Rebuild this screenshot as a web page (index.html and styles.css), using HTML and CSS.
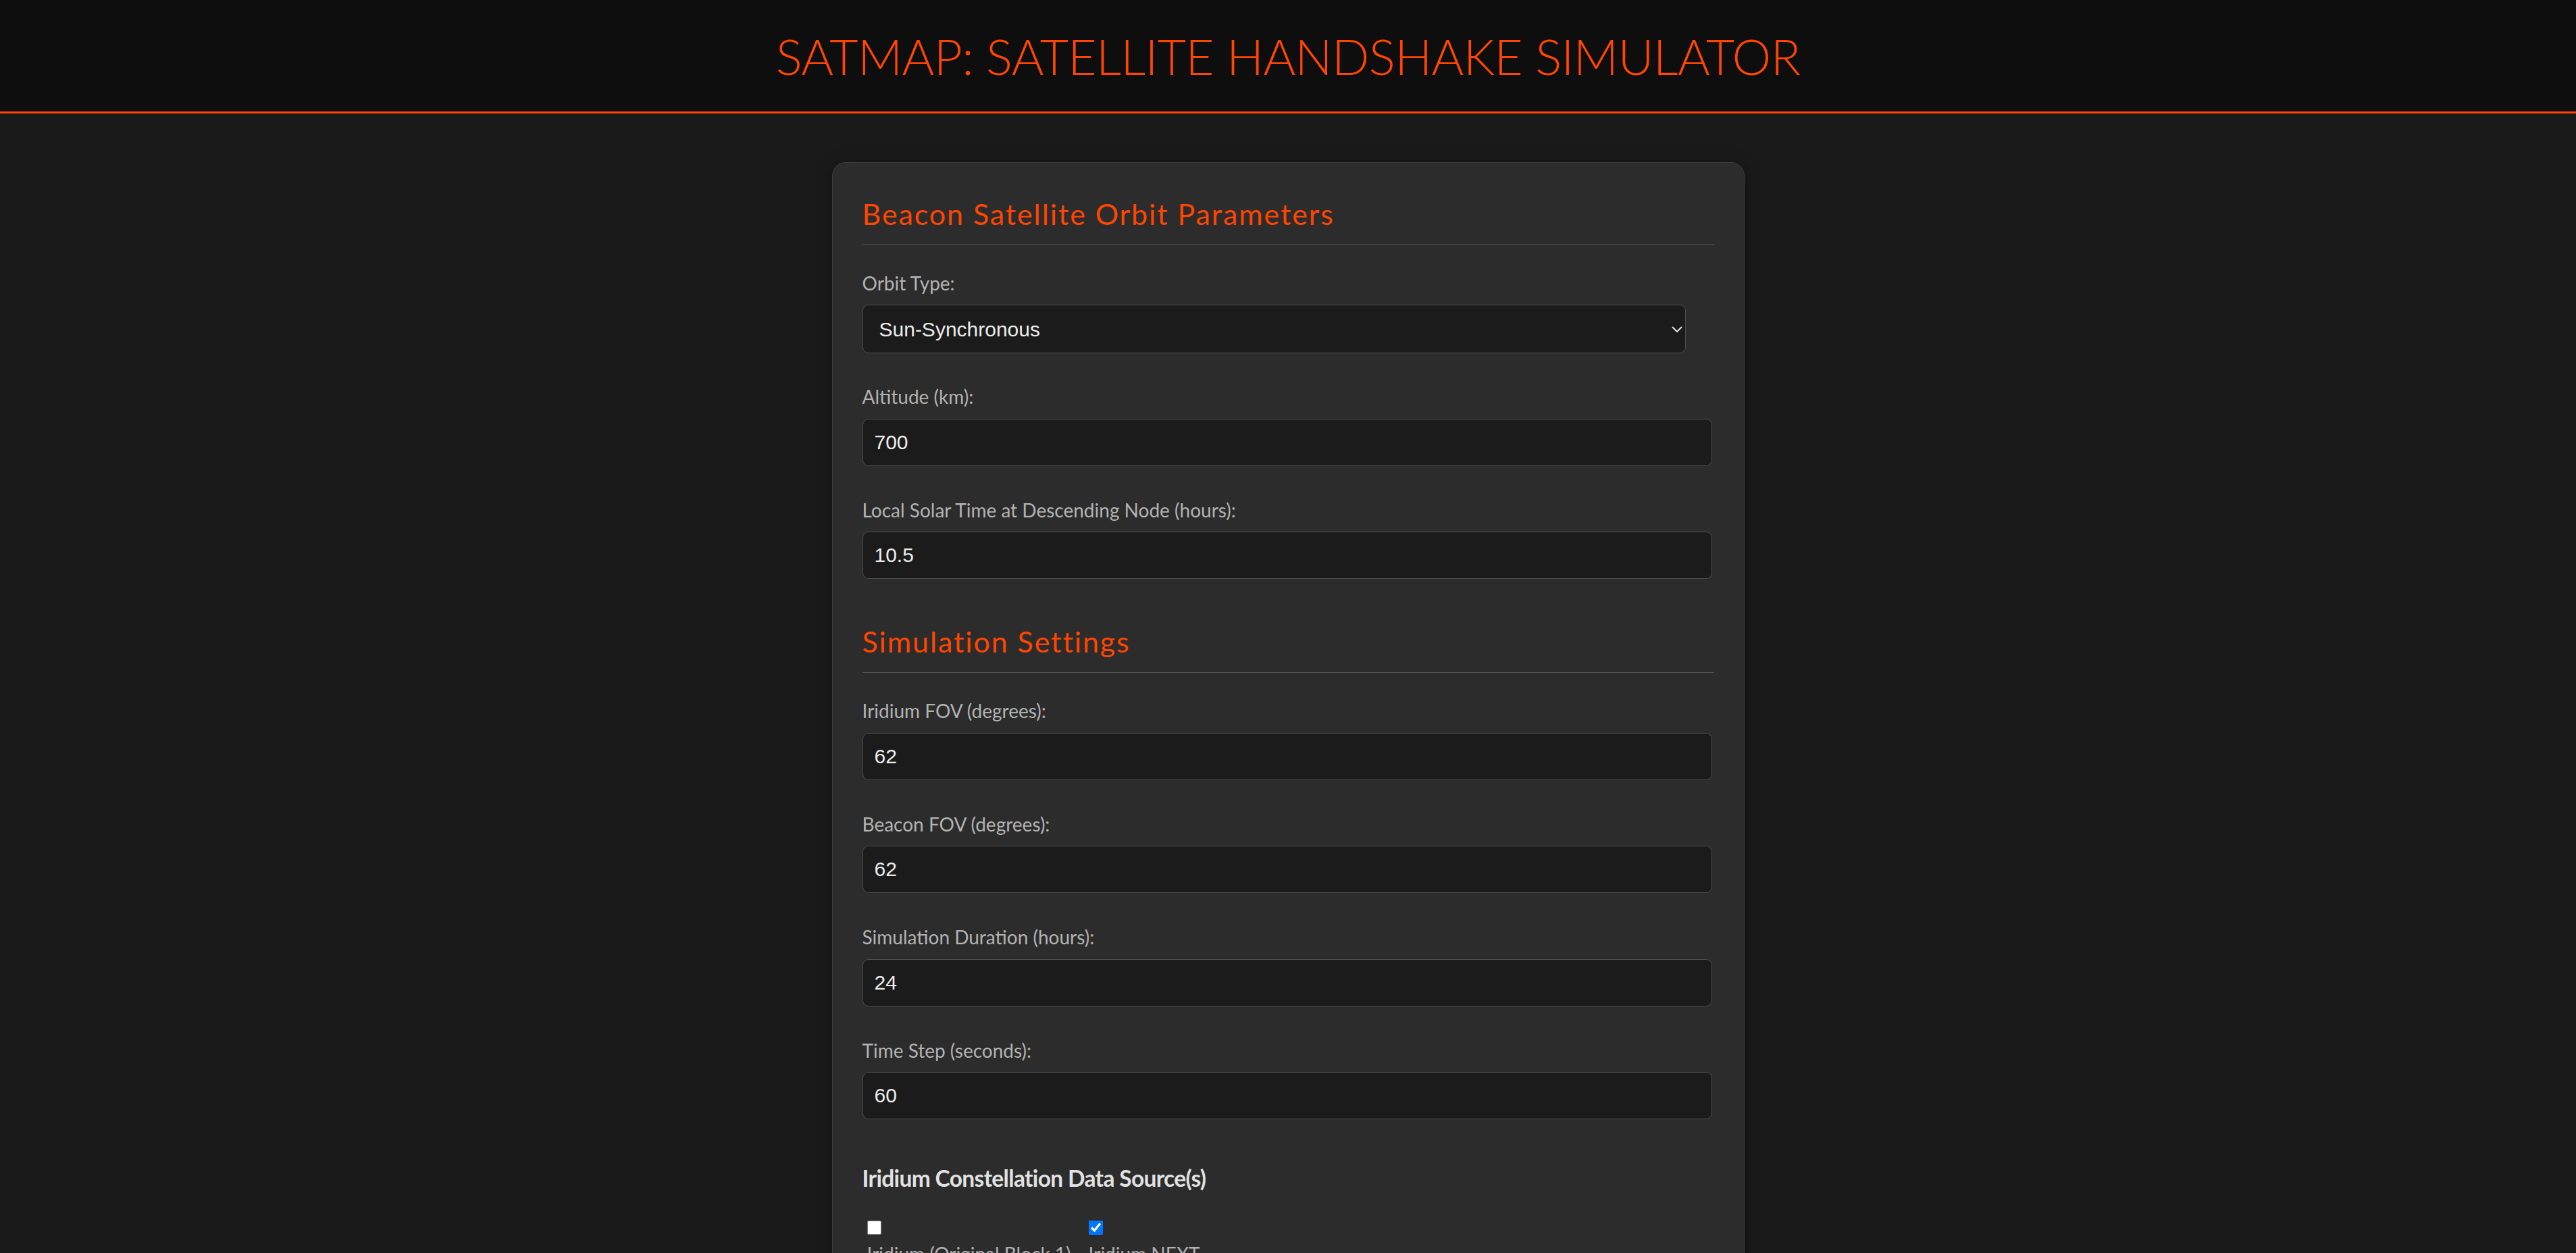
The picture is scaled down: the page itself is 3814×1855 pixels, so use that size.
FILE: index.html
```html
<!DOCTYPE html>
<html lang="en">
<head>
<meta charset="utf-8">
<title>SatMap: Satellite Handshake Simulator</title>
<link rel="stylesheet" href="styles.css">
</head>
<body>
<header class="site-header">
  <h1 class="site-title">SATMAP: SATELLITE HANDSHAKE SIMULATOR</h1>
</header>
<main class="page">
  <section class="panel">
    <h2 class="section-title">Beacon Satellite Orbit Parameters</h2>
    <div class="field field--select">
      <label class="field-label" for="orbitType">Orbit Type:</label>
      <div class="select-wrap">
        <select id="orbitType" class="select">
          <option>Sun-Synchronous</option>
          <option>Polar</option>
          <option>Equatorial</option>
        </select>
        <svg class="chevron" viewBox="0 0 16 9" width="16" height="9" aria-hidden="true"><path d="M1 1 L8 8 L15 1" fill="none" stroke="#e6e6e6" stroke-width="2"/></svg>
      </div>
    </div>
    <div class="field">
      <label class="field-label" for="altitude">Altitude (km):</label>
      <input id="altitude" class="input" type="text" value="700">
    </div>
    <div class="field">
      <label class="field-label" for="lst">Local Solar Time at Descending Node (hours):</label>
      <input id="lst" class="input" type="text" value="10.5">
    </div>

    <h2 class="section-title section-title--spaced">Simulation Settings</h2>
    <div class="field">
      <label class="field-label" for="iridiumFov">Iridium FOV (degrees):</label>
      <input id="iridiumFov" class="input" type="text" value="62">
    </div>
    <div class="field">
      <label class="field-label" for="beaconFov">Beacon FOV (degrees):</label>
      <input id="beaconFov" class="input" type="text" value="62">
    </div>
    <div class="field">
      <label class="field-label" for="duration">Simulation Duration (hours):</label>
      <input id="duration" class="input" type="text" value="24">
    </div>
    <div class="field">
      <label class="field-label" for="timeStep">Time Step (seconds):</label>
      <input id="timeStep" class="input" type="text" value="60">
    </div>

    <h3 class="sub-title">Iridium Constellation Data Source(s)</h3>
    <div class="checks">
      <label class="check">
        <input type="checkbox" class="check-box">
        <span class="check-text">Iridium (Original Block 1)</span>
      </label>
      <label class="check">
        <input type="checkbox" class="check-box" checked>
        <span class="check-text">Iridium NEXT</span>
      </label>
    </div>
  </section>
</main>
</body>
</html>
```
FILE: styles.css
```css
html, body {
  margin: 0;
  padding: 0;
}
body {
  background: #1a1a1a;
  font-family: Lato, "Open Sans", sans-serif;
  color: #b3b3b3;
}

.site-header {
  box-sizing: border-box;
  height: 168px;
  padding-top: 2px;
  background: #0e0e0e;
  border-bottom: 3px solid #ff4500;
  display: flex;
  align-items: center;
  justify-content: center;
}
.site-title {
  margin: 0;
  font-family: Lato, sans-serif;
  font-weight: 300;
  font-size: 73px;
  line-height: 1.2;
  letter-spacing: -0.7px;
  color: #ff4500;
}

.page {
  padding: 72px 0 40px;
}
.panel {
  width: 1351px;
  box-sizing: border-box;
  margin: 0 auto;
  background: #2c2c2c;
  border: 1px solid #3d3d3d;
  border-radius: 20px;
  padding: 50px 44px 44px;
  box-shadow: 0 4px 22px rgba(0, 0, 0, 0.35);
}

.section-title {
  margin: 0 0 40px;
  font-size: 43px;
  font-weight: 400;
  line-height: 1.2;
  letter-spacing: 1.9px;
  color: #ff4500;
  padding-bottom: 19px;
  border-bottom: 1px solid #555;
}
.section-title--spaced {
  margin-top: 67px;
}

.field {
  margin-bottom: 49px;
}
.field--select {
  margin-bottom: 48px;
}
.field-label {
  display: block;
  font-size: 28px;
  line-height: 1.2;
  color: #b3b3b3;
  margin-bottom: 15px;
}

.input,
.select {
  display: block;
  box-sizing: border-box;
  height: 70px;
  width: calc(100% - 3px);
  margin: 0;
  background: #1b1b1b;
  border: 1px solid #4d4d4d;
  border-radius: 9px;
  color: #ececec;
  font-family: "Liberation Sans", Arial, sans-serif;
  font-size: 30px;
  padding: 0 17px;
  outline: none;
}

.select-wrap {
  position: relative;
  width: calc(100% - 42px);
}
.select {
  -webkit-appearance: none;
  appearance: none;
  width: 100%;
  height: 72px;
  padding: 0 24px;
}
.chevron {
  position: absolute;
  right: 5px;
  top: 32px;
  width: 16px;
  height: 9px;
  pointer-events: none;
}

.sub-title {
  margin: 67px 0 42px;
  font-size: 33.5px;
  font-weight: 700;
  line-height: 1.2;
  letter-spacing: -0.65px;
  color: #e2e2e2;
}

.checks {
  display: flex;
  gap: 26px;
  padding-left: 7px;
}
.check {
  display: flex;
  flex-direction: column;
  align-items: flex-start;
  gap: 12px;
  font-size: 28px;
  line-height: 1.2;
  color: #b3b3b3;
}
.check-box {
  width: 21px;
  height: 21px;
  margin: 0;
}
.check-text {
  display: block;
}
```
